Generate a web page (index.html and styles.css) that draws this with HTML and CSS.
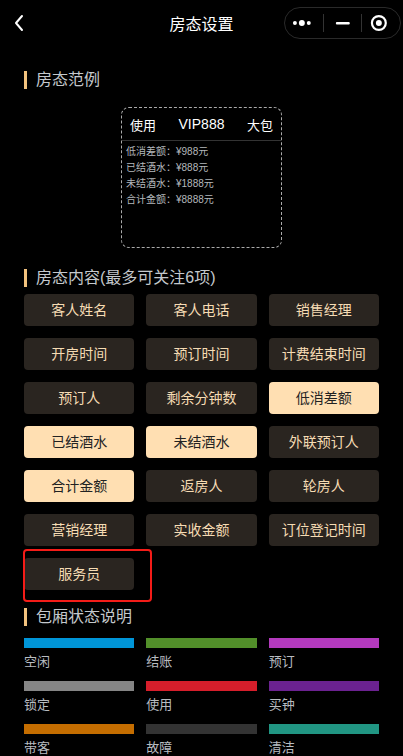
FILE: index.html
```html
<!DOCTYPE html>
<html lang="zh-CN">
<head>
  <meta charset="UTF-8">
  <meta name="viewport" content="width=device-width, initial-scale=1.0">
  <title>房态设置</title>
  <link rel="stylesheet" href="styles.css">
</head>
<body>
  <header class="nav">
    <svg class="nav-back" width="12" height="18" viewBox="0 0 12 18"><path d="M9 2 L3 9 L9 16" fill="none" stroke="#fff" stroke-width="2" stroke-linecap="round" stroke-linejoin="round"/></svg>
    <span class="nav-title">房态设置</span>
    <div class="capsule">
      <svg width="38" height="32" viewBox="0 0 38 32"><circle cx="10" cy="16" r="2" fill="#fff"/><circle cx="17" cy="16" r="3" fill="#fff"/><circle cx="24" cy="16" r="2" fill="#fff"/></svg>
      <i class="capsule-line"></i>
      <svg width="38" height="32" viewBox="0 0 38 32"><rect x="12" y="15" width="14" height="2.6" rx="1" fill="#fff"/></svg>
      <i class="capsule-line"></i>
      <svg width="38" height="32" viewBox="0 0 38 32"><circle cx="17" cy="16" r="7" fill="none" stroke="#fff" stroke-width="2.2"/><circle cx="17" cy="16" r="3" fill="#fff"/></svg>
    </div>
  </header>

  <h3 class="sec-title first">房态范例</h3>
  <div class="demo">
    <div class="demo-head">
      <span>使用</span>
      <span class="demo-no">VIP888</span>
      <span>大包</span>
    </div>
    <div class="demo-body">
      <p>低消差额：¥988元</p>
      <p>已结酒水：¥888元</p>
      <p>未结酒水：¥1888元</p>
      <p>合计金额：¥8888元</p>
    </div>
  </div>

  <h3 class="sec-title">房态内容(最多可关注6项)</h3>
  <section class="tags">
    <div class="tag">客人姓名</div>
    <div class="tag">客人电话</div>
    <div class="tag">销售经理</div>
    <div class="tag">开房时间</div>
    <div class="tag">预订时间</div>
    <div class="tag">计费结束时间</div>
    <div class="tag">预订人</div>
    <div class="tag">剩余分钟数</div>
    <div class="tag on">低消差额</div>
    <div class="tag on">已结酒水</div>
    <div class="tag on">未结酒水</div>
    <div class="tag">外联预订人</div>
    <div class="tag on">合计金额</div>
    <div class="tag">返房人</div>
    <div class="tag">轮房人</div>
    <div class="tag">营销经理</div>
    <div class="tag">实收金额</div>
    <div class="tag">订位登记时间</div>
    <div class="tag marked">服务员<span class="mark"></span></div>
  </section>

  <h3 class="sec-title third">包厢状态说明</h3>
  <section class="legend">
    <div class="legend-item"><i class="bar" style="background:#0095d8"></i>空闲</div>
    <div class="legend-item"><i class="bar" style="background:#528f2a"></i>结账</div>
    <div class="legend-item"><i class="bar" style="background:#b43abe"></i>预订</div>
    <div class="legend-item"><i class="bar" style="background:#858585"></i>锁定</div>
    <div class="legend-item"><i class="bar" style="background:#d61e2b"></i>使用</div>
    <div class="legend-item"><i class="bar" style="background:#6b2290"></i>买钟</div>
    <div class="legend-item"><i class="bar" style="background:#c46d00"></i>带客</div>
    <div class="legend-item"><i class="bar" style="background:#333333"></i>故障</div>
    <div class="legend-item"><i class="bar" style="background:#219683"></i>清洁</div>
  </section>
</body>
</html>
```

FILE: styles.css
```css
body { margin: 0; background: #000; color: #fff; font-family: "Liberation Sans", "Noto Sans CJK SC", sans-serif; }
.nav { position: relative; height: 46px; display: flex; align-items: center; justify-content: center; }
.nav-back { position: absolute; left: 13px; top: 14px; }
.nav-title { font-size: 16px; color: #fff; }
.capsule { position: absolute; right: 2px; top: 7px; height: 32px; width: 117px; box-sizing: border-box; border: 1px solid #2a2a2a; border-radius: 16px; display: flex; align-items: center; justify-content: center; }
.capsule svg { display: block; }
.capsule-line { width: 1px; height: 18px; background: #333; }
.sec-title { margin: 21px 24px 0; padding-left: 9px; border-left: 3px solid #f2c27e; font-size: 16px; line-height: 18px; font-weight: normal; color: #c4c8cc; }
.sec-title.first { margin-top: 25px; }
.sec-title.third { margin-top: 18px; }
.demo { width: 161px; height: 141px; box-sizing: border-box; margin: 18px auto 0; border: 1px dashed #aaa; border-radius: 8px; }
.demo-head { height: 32px; padding: 0 8px; display: flex; align-items: center; justify-content: space-between; border-bottom: 1px solid #333; font-size: 13px; }
.demo-no { font-size: 14px; }
.demo-body { padding: 3px 4px 0; font-size: 10px; line-height: 16px; color: #b4b8bc; }
.demo-body p { margin: 0; }
.tags { display: grid; grid-template-columns: repeat(3, 1fr); gap: 12px; padding: 0 24px; margin-top: 7px; }
.tag { position: relative; height: 32px; line-height: 32px; text-align: center; border-radius: 4px; background: #2a2520; color: #f6dcb4; font-size: 14px; }
.tag.on { background: #ffdfb2; color: #222; }
.mark { position: absolute; left: -1px; top: -9px; width: 129px; height: 53px; box-sizing: border-box; border: 2.5px solid #f41c18; border-radius: 4px; }
.legend { display: grid; grid-template-columns: repeat(3, 1fr); column-gap: 12px; row-gap: 9px; padding: 0 24px; margin-top: 12px; }
.legend-item { font-size: 13px; line-height: 20px; color: #b8bcc0; }
.bar { display: block; height: 10px; margin-bottom: 4px; }
```
